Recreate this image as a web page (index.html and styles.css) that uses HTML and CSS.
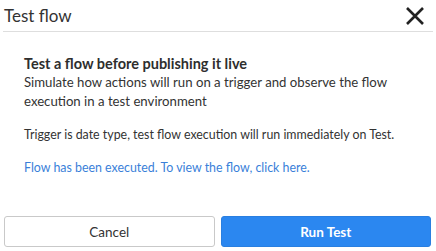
FILE: index.html
```html
<!DOCTYPE html>
<html lang="en">

<head>
    <meta charset="UTF-8">
    <meta name="viewport" content="width=device-width, initial-scale=1.0">
    <title>Test flow</title>
    <link rel="stylesheet" href="styles.css">
</head>

<body>
    <div class="modal">
        <!-- Header -->
        <div class="modal-header">
            <h1>Test flow</h1>
            <button class="close-btn" aria-label="Close">
                <svg width="20" height="20" viewBox="0 0 20 20">
                    <path d="M2 2 L18 18 M18 2 L2 18" stroke="#222" stroke-width="2.6" fill="none" />
                </svg>
            </button>
        </div>

        <!-- Body -->
        <div class="modal-body">
            <h2>Test a flow before publishing it live</h2>
            <p>Simulate how actions will run on a trigger and observe the flow execution in a test environment</p>
            <p class="trigger-note">Trigger is date type, test flow execution will run immediately on Test.</p>
            <a class="flow-link" href="#">Flow has been executed. To view the flow, click here.</a>
        </div>

        <!-- Footer -->
        <div class="modal-footer">
            <button class="btn btn-cancel">Cancel</button>
            <button class="btn btn-run">Run Test</button>
        </div>
    </div>
</body>

</html>
```

FILE: styles.css
```css
body {
    font-family: 'Lato', sans-serif;
    background-color: #fff;
    color: #2e2e2e;
    margin: 0;
    padding: 0;
}

.modal {
    width: 436px;
    height: 251px;
    display: flex;
    flex-direction: column;
}

.modal-header {
    display: flex;
    align-items: center;
    justify-content: space-between;
    height: 32px;
    margin: 0 3px;
    padding: 0 8px 0 1px;
    border-bottom: 1px solid #dedede;
    box-sizing: border-box;
}

.modal-header h1 {
    margin: 0;
    font-size: 17px;
    font-weight: normal;
    color: #333;
}

.close-btn {
    background: none;
    border: none;
    padding: 0;
    display: flex;
    cursor: pointer;
}

.modal-body {
    padding: 22px 24px 0;
    flex: 1;
}

.modal-body h2 {
    margin: 0;
    font-size: 14.5px;
    font-weight: bold;
    color: #2e2e2e;
    line-height: 19px;
}

.modal-body p {
    margin: 0;
    font-size: 13.2px;
    line-height: 19px;
    color: #333;
}

.modal-body .trigger-note {
    margin-top: 14px;
    font-size: 12.4px;
    white-space: nowrap;
}

.flow-link {
    display: block;
    margin-top: 14px;
    font-size: 12.4px;
    line-height: 19px;
    color: #3a7fd9;
    text-decoration: none;
}

.modal-footer {
    display: flex;
    gap: 6px;
    padding: 0 5px 4px 4px;
}

.btn {
    flex: 1;
    height: 31px;
    border-radius: 3px;
    font-family: 'Lato', sans-serif;
    font-size: 13.5px;
    cursor: pointer;
}

.btn-cancel {
    background-color: #fff;
    border: 1px solid #c9c9c9;
    color: #333;
}

.btn-run {
    background-color: #2b87f0;
    border: 1px solid #2a7fe0;
    color: #fff;
    font-weight: bold;
}
```
